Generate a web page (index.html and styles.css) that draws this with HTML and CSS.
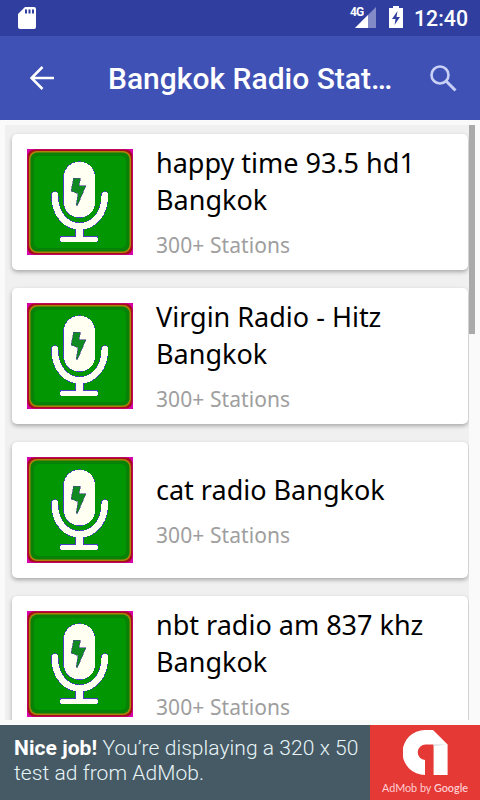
FILE: index.html
```html
<!DOCTYPE html>
<html lang="en">
<head>
    <meta charset="UTF-8">
    <title>Bangkok Radio Stations</title>
    <link rel="stylesheet" href="styles.css">
</head>
<body>
    <svg class="sprite">
        <symbol id="mic" viewBox="0 0 107 107">
            <rect width="107" height="107" fill="#d800a8"/>
            <rect x="0.5" y="0.5" width="106" height="106" rx="7" fill="#a30d1c"/>
            <rect x="2" y="2" width="103" height="103" rx="8" fill="#b08008"/>
            <rect x="3.5" y="3.5" width="100" height="100" rx="7" fill="#078207"/>
            <rect x="7" y="7" width="93" height="93" rx="5" fill="#029602"/>
            <g fill="#4a3fc4" shape-rendering="crispEdges">
                <rect x="36.5" y="12.5" width="32.500" height="57" rx="16"/>
                <path d="M28 46.500C28 88.500 78.500 88.500 78.500 46.500" fill="none" stroke="#4a3fc4" stroke-width="7.500" stroke-linecap="round"/>
                <path d="M48.500 77h9v11H72v6H33v-6h15.500z"/>
            </g>
            <g fill="#fffff2" shape-rendering="crispEdges">
                <rect x="37.500" y="13" width="31" height="56" rx="15"/>
                <path d="M28 46.500C28 88.500 78.500 88.500 78.500 46.500" fill="none" stroke="#fffff2" stroke-width="6.500" stroke-linecap="round"/>
                <rect x="49" y="77" width="7.500" height="14"/>
                <rect x="33.500" y="88.500" width="38" height="5.500" rx="2"/>
            </g>
            <path d="M47 29.500h7l-1.500 7.500h7L51 57h-1.500l2-12-7-2.500z" fill="#108a20" stroke="#4a4590" stroke-width="0.600" shape-rendering="crispEdges"/>
        </symbol>
    </svg>

    <div class="status-bar">
        <svg class="sd-icon" width="18" height="22" viewBox="0 0 18 22">
            <path d="M7 0h9a2 2 0 0 1 2 2v18a2 2 0 0 1-2 2H2a2 2 0 0 1-2-2V7z" fill="#fff"/>
            <path d="M7 2.500h2v4H7zM10.500 2.500h2v4h-2zM14 2.500h2v4h-2z" fill="#303f9f"/>
        </svg>
        <span class="network">4G</span>
        <svg class="signal-icon" width="21" height="21" viewBox="0 0 21 21">
            <path d="M21 0v21H0z" fill="#fff" fill-opacity="0.4"/>
            <path d="M13 8v13H0z" fill="#fff"/>
        </svg>
        <svg class="battery-icon" width="14" height="22" viewBox="0 0 14 22">
            <path d="M4 0h6v2h4v20H0V2h4z" fill="#fff"/>
            <path d="M8.500 5L3 13h3.500L5.500 19l5.500-8H7.500z" fill="#303f9f"/>
        </svg>
        <span class="clock">12:40</span>
    </div>

    <div class="toolbar">
        <svg class="back-icon" width="24" height="24" viewBox="0 0 24 24">
            <path d="M12.500 1L1.500 12l11 11M2 12h22" fill="none" stroke="#fff" stroke-width="2.500"/>
        </svg>
        <h1>Bangkok Radio Stat…</h1>
        <svg class="search-icon" width="27" height="27" viewBox="0 0 27 27">
            <circle cx="10" cy="10" r="8.500" fill="none" stroke="#c9d0f5" stroke-width="2.600"/>
            <path d="M16 16l9.500 9.500" fill="none" stroke="#c9d0f5" stroke-width="3"/>
        </svg>
    </div>

    <div class="content">
        <div class="list">
            <div class="card">
                <svg class="thumb"><use href="#mic"/></svg>
                <div class="info">
                    <h2>happy time 93.5 hd1 Bangkok</h2>
                    <p>300+ Stations</p>
                </div>
            </div>
            <div class="card">
                <svg class="thumb"><use href="#mic"/></svg>
                <div class="info">
                    <h2>Virgin Radio - Hitz Bangkok</h2>
                    <p>300+ Stations</p>
                </div>
            </div>
            <div class="card">
                <svg class="thumb"><use href="#mic"/></svg>
                <div class="info">
                    <h2>cat radio Bangkok</h2>
                    <p>300+ Stations</p>
                </div>
            </div>
            <div class="card">
                <svg class="thumb"><use href="#mic"/></svg>
                <div class="info">
                    <h2>nbt radio am 837 khz Bangkok</h2>
                    <p>300+ Stations</p>
                </div>
            </div>
        </div>
        <div class="scrollbar"></div>
    </div>

    <div class="ad">
        <p class="ad-text"><b>Nice job!</b> You’re displaying a 320 x 50<br>test ad from AdMob.</p>
        <div class="ad-logo">
            <svg width="45" height="45" viewBox="0 0 45 45">
                <path d="M22 0h8l14.600 14.500V45h-14V14.500H23a7.500 7.500 0 0 0-1 15.500v15A22.500 22.500 0 0 1 22 0z" fill="#fff"/>
                <path d="M30 14.500h14.600L30.600 16z" fill="#d5d8dc"/>
            </svg>
            <span>AdMob by <b>Google</b></span>
        </div>
    </div>
</body>
</html>
```

FILE: styles.css
```css
* {
    box-sizing: border-box;
}

body {
    margin: 0;
    height: 800px;
    display: flex;
    flex-direction: column;
    overflow: hidden;
    background-color: #fafafa;
    font-family: Roboto, sans-serif;
}

h1, h2, p {
    margin: 0;
    font-weight: normal;
}

svg {
    display: block;
    flex: none;
}

.sprite {
    position: absolute;
    width: 0;
    height: 0;
}

.status-bar {
    display: flex;
    height: 36px;
    padding: 0 12px 0 18px;
    background-color: #303f9f;
    color: #fff;
}

.sd-icon {
    margin-top: 7px;
}

.network {
    width: 12px;
    margin: 5px -7px 0 auto;
    font-size: 12px;
    line-height: 14px;
    font-weight: bold;
    letter-spacing: -1px;
}

.signal-icon {
    margin-top: 7px;
}

.battery-icon {
    margin: 6px 0 0 13px;
}

.clock {
    width: 54px;
    margin-left: 11px;
    font-size: 21.300px;
    line-height: 38px;
    font-weight: 500;
}

.toolbar {
    display: flex;
    align-items: center;
    height: 84px;
    padding: 0 23px 0 30px;
    background-color: #3f51b5;
    color: #fff;
}

.toolbar h1 {
    flex: 1;
    margin-left: 54px;
    padding-top: 2px;
    font-size: 30px;
    line-height: 36px;
    font-weight: 500;
    white-space: nowrap;
}

.content {
    display: flex;
    flex: none;
    height: 600px;
    padding: 5px 5px 0;
}

.list {
    display: flex;
    flex-direction: column;
    gap: 18px;
    width: 464px;
    height: 595px;
    padding: 9px 1px 0 7px;
    overflow: hidden;
    background-color: #f0f0f0;
}

.card {
    display: flex;
    flex: none;
    align-items: center;
    height: 136px;
    padding-left: 15px;
    background-color: #fff;
    border-radius: 5px;
    box-shadow: 0 2px 4px rgba(0, 0, 0, 0.3);
}

.thumb {
    width: 106px;
    height: 106px;
}

.info {
    width: 290px;
    margin-left: 23px;
    font-family: "Noto Sans", sans-serif;
}

.info h2 {
    font-size: 27px;
    line-height: 37px;
    color: #000;
}

.info p {
    margin-top: 13px;
    font-size: 21px;
    line-height: 29px;
    letter-spacing: 0.080px;
    color: #9e9e9e;
}

.scrollbar {
    width: 6px;
    height: 209px;
    background-color: #aaa;
}

.ad {
    display: flex;
    height: 75px;
    margin-top: 5px;
    background-color: #455a64;
}

.ad-text {
    width: 370px;
    padding: 11px 0 0 14px;
    font-size: 21px;
    line-height: 25px;
    font-weight: 300;
    letter-spacing: 0.060px;
    color: #e8f4f8;
    white-space: nowrap;
}

.ad-text b {
    font-weight: 700;
    color: #fff;
}

.ad-logo {
    display: flex;
    flex-direction: column;
    align-items: center;
    width: 110px;
    padding-top: 5px;
    background-color: #e53935;
    color: #ffcdd2;
}

.ad-logo span {
    margin-top: 5px;
    font-family: Lato, sans-serif;
    font-size: 10.800px;
    line-height: 15px;
    white-space: nowrap;
}

.ad-logo b {
    font-weight: 600;
}
```
